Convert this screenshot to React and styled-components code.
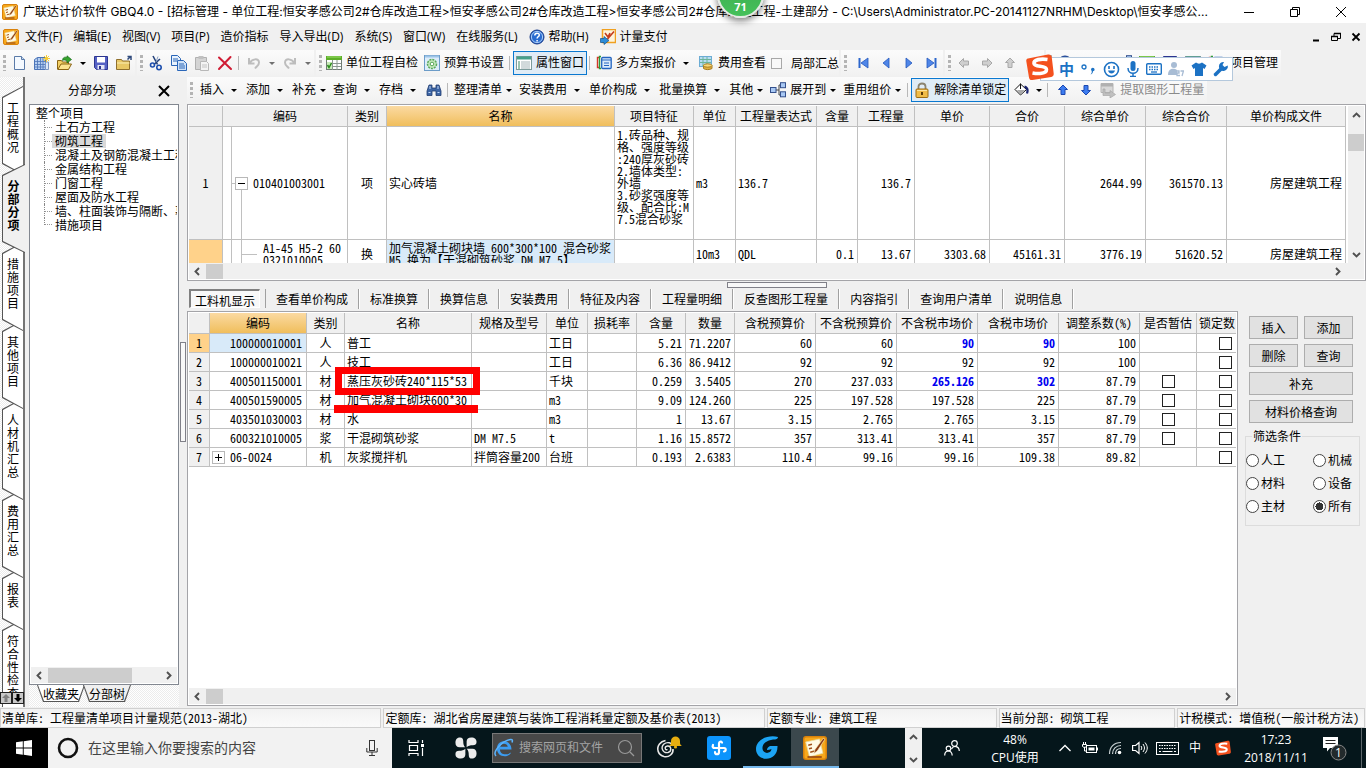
import React from 'react'
import { styled, createGlobalStyle, css } from 'styled-components'

const ui = '"Open Sans", "Noto Sans CJK SC", sans-serif'
const song = '"Noto Sans Mono CJK SC", "Noto Sans CJK SC", monospace'
const dither = 'repeating-conic-gradient(#ffffff 0 25%, #ececec 0 50%) 0 0 / 2px 2px'

const treeItems = ['土石方工程', '砌筑工程', '混凝土及钢筋混凝土工程', '金属结构工程', '门窗工程', '屋面及防水工程', '墙、柱面装饰与隔断、幕', '措施项目']
const sideTabs = ['工程概况', '分部分项', '措施项目', '其他项目', '人材机汇总', '费用汇总', '报表', '符合性检查']
const detailTabs = ['查看单价构成', '标准换算', '换算信息', '安装费用', '特征及内容', '工程量明细', '反查图形工程量', '内容指引', '查询用户清单', '说明信息']
const billCols = [['', 34], ['编码', 125], ['类别', 39], ['名称', null], ['项目特征', 79], ['单位', 42], ['工程量表达式', 81], ['含量', 41], ['工程量', 57], ['单价', 75], ['合价', 75], ['综合单价', 81], ['综合合价', 81], ['单价构成文件', 119]]
const resCols = [['', 21], ['编码', 97], ['类别', 38], ['名称', 127], ['规格及型号', 75], ['单位', 41], ['损耗率', 49], ['含量', 49], ['数量', 49], ['含税预算价', 81], ['不含税预算价', 81], ['不含税市场价', 81], ['含税市场价', 81], ['调整系数(%)', 81], ['是否暂估', 57], ['锁定数', 58]]
const resRows = [
  ['100000010001', '人', '普工', '', '工日', '5.21', '71.2207', '60', '60', '90', '90', '100'],
  ['100000010021', '人', '技工', '', '工日', '6.36', '86.9412', '92', '92', '92', '92', '100'],
  ['400501150001', '材', '蒸压灰砂砖240*115*53', '', '千块', '0.259', '3.5405', '270', '237.033', '265.126', '302', '87.79'],
  ['400501590005', '材', '加气混凝土砌块600*30', '', 'm3', '9.09', '124.260', '225', '197.528', '197.528', '225', '87.79'],
  ['403501030003', '材', '水', '', 'm3', '1', '13.67', '3.15', '2.765', '2.765', '3.15', '87.79'],
  ['600321010005', '浆', '干混砌筑砂浆', 'DM M7.5', 't', '1.16', '15.8572', '357', '313.41', '313.41', '357', '87.79'],
  ['06-0024', '机', '灰浆搅拌机', '拌筒容量200', '台班', '0.193', '2.6383', '110.4', '99.16', '99.16', '109.38', '89.82']
]

/* ---------- icons ---------- */

const Svg = ({ w = 16, h, box, children }) => (
  <svg width={w} height={h || w} viewBox={box || `0 0 ${w} ${h || w}`} fill="none" aria-hidden="true">{children}</svg>
)
const AppIcon = ({ w = 16 }) => (
  <Svg w={w} box="0 0 16 16">
    <rect x=".5" y=".5" width="15" height="15" rx="1.5" fill="#f7a81b" stroke="#d9820c" />
    <path d="M1.800 4l9.200-2 2.300 9.500-9 2.300z" fill="#fffbe6" stroke="#e8d9a0" strokeWidth=".5" />
    <path d="M3.500 6.200l2.500-.7M4 8.500l2-.5M4.800 10.800l3-.8" stroke="#a0521c" />
    <path d="M13.500 1.500L8 9l-.8 2.600L9.500 10 14.500 2.300z" fill="#8c3b12" stroke="#fff3c4" strokeWidth=".4" />
    <path d="M3 14h9.500" stroke="#8c3b12" />
  </Svg>
)
const NewDoc = () => <Svg><path d="M3.500 1.500h7l3 3v10h-10z" fill="#f4f9ff" stroke="#5a7aa8" /><path d="M10.500 1.500v3h3" stroke="#5a7aa8" fill="#c8daf0" /></Svg>
const NewGrid = () => (
  <Svg>
    <path d="M.5 4.500l3-2h8v12H.5z" fill="#b4cdf0" stroke="#4b74b8" />
    <path d="M3.500 2.500v12M6.500 2.500v12M9 2.500v12M.5 6.500h11M.5 9.500h11M.5 12h11" stroke="#4b74b8" strokeWidth=".8" />
    <path d="M11.500 7h3v7.500h-3z" fill="#dce8f8" stroke="#7a96c4" />
    <path d="M12.500 0v7M9 3.500h7M10 1l5 5M15 1l-5 5" stroke="#f4cc38" />
  </Svg>
)
const OpenFolder = () => (
  <Svg>
    <path d="M.5 14V5.500h4l1 1.500h6v7z" fill="#f3cf63" stroke="#8a6414" />
    <path d="M.8 14.500L4 9h10.500l-3 5.500z" fill="#fbe38f" stroke="#8a6414" />
    <path d="M5.500 5.500C5.500 2.500 8 1.500 10 2.500V.8l4.500 3.700L10 8V6C8.500 4.800 7 4.800 5.500 5.500z" fill="#36a52e" stroke="#17691a" strokeWidth=".7" />
  </Svg>
)
const Save = () => <Svg><path d="M1.500 1.500h13v13h-11l-2-2z" fill="#5561c4" stroke="#2c3590" /><path d="M4 2h8v5.500H4z" fill="#fff" /><path d="M4.500 10h7v4.500h-7z" fill="#e4e6f6" /><path d="M6 11h2v3H6z" fill="#2c3590" /></Svg>
const FolderUp = () => <Svg><path d="M.5 14.500v-10h5l1 1.500h7v8.500z" fill="#e9c865" stroke="#8f6f2c" /><path d="M1 8h12.500" stroke="#fbeeb4" /><path d="M11.500 4.500l3-3M11.500 1.500h3.500v3.500" stroke="#2f4a7c" strokeWidth="1.500" /></Svg>
const Cut = () => <Svg><path d="M5 1l4.500 8.500M12 4L6 9.500" stroke="#24427c" strokeWidth="1.600" /><path d="M10 1.500L8 7" stroke="#8aa0c4" /><circle cx="4.500" cy="10" r="2" stroke="#1e4fae" strokeWidth="1.600" /><circle cx="11" cy="12.500" r="2.200" stroke="#1e4fae" strokeWidth="1.600" /></Svg>
const Copy = () => <Svg><path d="M.5.5h6l3 3v7h-9z" fill="#e8f2fd" stroke="#2a66b8" /><path d="M2 4h5M2 6h4" stroke="#2a66b8" /><path d="M6.500 5.500h6l3 3v7h-9z" fill="#cfe2f8" stroke="#2a66b8" /><path d="M8 9h5M8 11h6M8 13h6" stroke="#2a66b8" /></Svg>
const Paste = () => <Svg><path d="M1.500 2.500h11v12h-11z" fill="#d4d4d4" stroke="#b0b0b0" /><path d="M4.500 1h5v3h-5z" fill="#c0c0c0" /><path d="M6.500 6.500h6l2 2v7h-8z" fill="#f4f4f4" stroke="#b8b8b8" /><path d="M8 10h5M8 12h5" stroke="#c4c4c4" /></Svg>
const RedX = () => <Svg><path d="M2 2.500l12 11.500M13.500 2L2 14" stroke="#d01c34" strokeWidth="2" strokeLinecap="round" /></Svg>
const Undo = ({ flip }) => <Svg><g transform={flip ? 'matrix(-1 0 0 1 16 0)' : undefined}><path d="M3 3v5.500h5.500" stroke="#bdbdbd" strokeWidth="2" /><path d="M4 8c1.500-4 9-5.500 9-.5 0 3-2 3.500-4 6" stroke="#bdbdbd" strokeWidth="2" /></g></Svg>
const CheckTable = () => <Svg><rect x=".5" y="1.500" width="15" height="13" fill="#fff" stroke="#707c74" /><path d="M0 1h16v4H0z" fill="#5cae28" /><path d="M1 2h14" stroke="#9be06c" /><path d="M1 8.500h14M1 11.500h14M6.500 5v10M11 5v10" stroke="#8c9890" /><path d="M1 7h5v7H1z" fill="#c8ecb8" /><path d="M1.500 10l1.500 2.500L5.500 8" stroke="#2b8a1c" strokeWidth="1.500" /></Svg>
const Gear = () => <Svg><rect x=".5" y=".5" width="15" height="15" fill="#dcecfa" stroke="#6c9cc8" /><path d="M1 1.500h14" stroke="#9cc4e8" strokeWidth="2" /><circle cx="8" cy="9" r="4.500" fill="#c4e8bc" stroke="#5aa85a" strokeDasharray="2 1" strokeWidth="1.500" /><circle cx="8" cy="9" r="1.800" fill="#fff" stroke="#5aa85a" /></Svg>
const ListWin = () => <Svg><rect x=".5" y="1.500" width="15" height="13" fill="#fff" stroke="#7c9c9c" /><path d="M1 3h14" stroke="#46a08c" strokeWidth="3" /><path d="M2 7h2M2 9h2M2 11h2M2 13h2" stroke="#3c8c64" /><path d="M5 7h9M5 9h9M5 11h9M5 13h9" stroke="#a4b4b8" /></Svg>
const Multi = () => <Svg><path d="M3 2.500H1.500v10H3" stroke="#d43828" strokeWidth="1.400" /><path d="M5 1.500H3.500v12H5" stroke="#2c9c38" strokeWidth="1.400" /><rect x="5.700" y="2.500" width="9.500" height="11" rx="1" fill="#dcebfc" stroke="#2464c0" strokeWidth="1.300" /><path d="M6 5h9M8 8h5M8 10.500h5" stroke="#2464c0" /></Svg>
const Fee = () => <Svg><rect x="1.500" y="1.500" width="12" height="10" fill="#b8dcf4" stroke="#6cacd4" /><path d="M2 4.500h11M2 7.500h11M5 2v9M9 2v9" stroke="#6cb49c" /><path d="M5.500 10.500v3c2 1.500 6 1.500 8.500 0v-3" fill="#e0b040" stroke="#a87c20" /><ellipse cx="9.700" cy="10.500" rx="4.300" ry="1.700" fill="#f8d878" stroke="#a87c20" /></Svg>
const Nav = ({ d, bar }) => <Svg><path d={d} fill="#4f86e8" stroke="#2458bc" strokeWidth=".8" />{bar && <path d={bar} stroke="#2c66cc" strokeWidth="2" />}</Svg>
const Arrow = ({ r = 0, c = '#cfcfcf', s = '#a8a8a8' }) => <Svg><path d="M3 8l4.500-4.500V6h5v4h-5v2.500z" fill={c} stroke={s} transform={`rotate(${r} 8 8)`} /></Svg>
const Binoc = () => <Svg><path d="M3 3h3v3h4V3h3l2 6v4.500h-5V9H6v4.500H1V9z" fill="#3c64a4" stroke="#223c70" strokeWidth=".8" /><path d="M2.500 10.500h2M11.500 10.500h2M4 4v3M12 4v3" stroke="#c0d8f8" /></Svg>
const Expand = () => <Svg><path d="M6 8h3M9 3v10M9 3h2M9 13h2" stroke="#444" /><rect x=".5" y="5.500" width="5.500" height="5" fill="#a8c8f4" stroke="#34508c" /><rect x="10.500" y=".7" width="5" height="5" fill="#a8c8f4" stroke="#34508c" /><rect x="10.500" y="9.800" width="5" height="5" fill="#a8c8f4" stroke="#34508c" /></Svg>
const Lock = () => <Svg><path d="M4.500 8V4.500c0-4 7-4 7 0V8" stroke="#8c8470" strokeWidth="1.800" /><rect x="2" y="7" width="12" height="8.500" rx="1" fill="#f0bc48" stroke="#9c6c14" /><path d="M3 8.500h10" stroke="#fbe4a0" /><path d="M8 10v3" stroke="#5c3c08" strokeWidth="2" /></Svg>
const Paint = () => <Svg><path d="M2 7.500L7.500 2l6 5.500L7.500 13z" fill="#fff" stroke="#111" /><path d="M4 8h8l-4.500 4.500z" fill="#aaa" /><path d="M7.500 7V1.500" stroke="#111" /><path d="M11.500 4.500c3 1 3.500 4 2.500 7" stroke="#1a2470" strokeWidth="2.200" /></Svg>
const Extract = () => <Svg><path d="M1 1.500h12v9H1z" fill="#d8d8d8" stroke="#b4b4b4" /><path d="M1 3h12" stroke="#b0b0b0" strokeWidth="3" /><path d="M5 7v4h5V8.500l5.500 4L10 16v-2.500H3V7z" fill="#c0c0c0" stroke="#a8a8a8" strokeWidth=".7" /></Svg>
const Help = () => <Svg><circle cx="8" cy="8" r="7" fill="#2a6cd0" stroke="#1c3c88" /><circle cx="8" cy="8" r="5.600" stroke="#a8ccf8" /><path d="M5.800 6.500c0-3 4.500-3 4.500-.4 0 1.700-2.200 1.500-2.200 3.400M8.100 11v1.500" stroke="#fff" strokeWidth="1.500" /></Svg>
const PayIcon = () => <Svg><rect x="2.500" y=".5" width="13" height="13" fill="#fdf4dc" stroke="#f0a020" strokeWidth="1.500" /><path d="M14 2.500L7.500 10M5 4l3 4 2-4" stroke="#c43c1c" strokeWidth="1.600" /><path d="M.5 9.500H4V7.500l5 4L4 15.500v-2H.5z" fill="#2c8cd8" stroke="#10508c" strokeWidth=".7" /></Svg>
const Chev = ({ r = 0, c = '#505050', w = 9 }) => <Svg w={w} box="0 0 9 9"><path d="M6 1L2.500 4.500 6 8" stroke={c} strokeWidth="1.900" transform={`rotate(${r} 4.500 4.500)`} /></Svg>
const SogouS = ({ w }) => (
  <Svg w={w} box="0 0 28 28">
    <path d="M2 5.500L22 1.500c2-.4 3.300.5 3.700 2.300l2 16.700c.2 2-.6 3-2.500 3.400L6.500 27c-2 .3-3.200-.6-3.500-2.500L.3 8.200C.1 6.700.6 5.800 2 5.500z" fill="#f4511e" />
    <path d="M21.500 6.500C15 5.500 7.500 6.500 8 10.500c.5 4 12.500 1.500 12.500 6 0 4.500-8.500 4.500-14 3.500" stroke="#fff" strokeWidth="3.600" />
  </Svg>
)

/* ---------- base ---------- */

const Global = createGlobalStyle`
  *, *::before, *::after { box-sizing: border-box; }
  body { margin: 0; background: #f0f0f0; overflow: hidden; }
  button, input { font: inherit; color: inherit; margin: 0; }
  button { padding: 0; border: 0; background: none; white-space: nowrap; }
  svg { display: block; flex: none; }
`
const Window = styled.div`
  position: relative;
  display: flex;
  flex-direction: column;
  height: 100vh;
  font: 12px/16px ${ui};
  color: #000;
  background: #f0f0f0;
`
const TitleBar = styled.header`
  display: flex;
  align-items: center;
  height: 23px;
  flex: none;
  background: #fff;
  padding: 0 2px;
`
const Title = styled.h1`
  flex: 1;
  min-width: 0;
  margin: 0 0 0 5px;
  font: 400 12px/16px Inter, "Noto Sans CJK SC", sans-serif;
  white-space: nowrap;
  overflow: hidden;
`
const WinButton = styled.button`
  width: ${p => (p.$small ? 20 : 46)}px;
  height: 22px;
  display: grid;
  place-items: center;
`
const Bubble = styled.div`
  position: absolute;
  left: 717px;
  top: -29px;
  width: 47px;
  height: 47px;
  border-radius: 50%;
  border: 2px solid #e4e9e4;
  background: linear-gradient(#3aa64c, #45c15a);
  box-shadow: 0 3px 7px rgba(0, 0, 0, 0.5);
  color: #fff;
  font: bold 11px/14px ${ui};
  text-align: center;
  padding-top: 27px;
  z-index: 5;
`
const MenuBar = styled.nav`
  display: flex;
  align-items: center;
  height: 27px;
  flex: none;
  padding-left: 3px;
`
const MenuItem = styled.button`
  display: flex;
  align-items: center;
  gap: 4px;
  height: 22px;
  padding: 0 5px 0 6px;
`
const Spacer = styled.div`
  flex: 1;
`
const ToolRow = styled.div`
  display: flex;
  gap: 2px;
  height: 27px;
  flex: none;
`
const ToolGroup = styled.div`
  display: flex;
  align-items: center;
  height: 26px;
  background: linear-gradient(#fbfbfb, #f1f1f1);
`
const Grip = styled.i`
  width: 3px;
  height: 16px;
  margin: 0 ${p => (p.$wide ? 4 : 1)}px 0 3px;
  background: repeating-linear-gradient(#b4b4b4 0 3px, transparent 3px 5px);
`
const Tool = styled.button`
  display: flex;
  align-items: center;
  gap: 4px;
  height: 24px;
  padding: 0 3px;
  color: ${p => (p.disabled ? '#8a8a8a' : '#000')};
  ${p => p.$on && css`
    padding: 0 2px;
    border: 1px solid #0a78d0;
    background: #e0ecf6;
  `}
`
const IconTool = styled.button`
  width: 23px;
  height: 24px;
  display: grid;
  place-items: center;
`
const Sep = styled.i`
  width: 1px;
  height: 14px;
  margin: 0 3px 0 2px;
  background: #b8b8b8;
`
const Caret = styled.i`
  width: ${p => (p.$tight ? 14 : 19)}px;
  margin-right: -3px;
  margin-left: -4px;
  display: grid;
  place-items: center;
  &::after {
    content: '';
    border: 3px solid transparent;
    border-top-color: #000;
    border-bottom: 0;
  }
`
const CaretTool = styled.button`
  width: 13px;
  height: 24px;
  display: grid;
  place-items: center;
  &::after {
    content: '';
    border: 3px solid transparent;
    border-top-color: ${p => (p.disabled ? '#707070' : '#000')};
    border-bottom: 0;
  }
`
const CheckLabel = styled.label`
  display: flex;
  align-items: center;
  gap: 9px;
  padding: 0 0 0 2px;
  font-family: ${song};
`
const ToolCheck = styled.input`
  appearance: none;
  width: 11px;
  height: 11px;
  border: 1px solid #a8a8a8;
  background: #f8f8f8;
`
const ImeBar = styled.div`
  position: absolute;
  left: 1026px;
  top: 52px;
  width: 207px;
  height: 29px;
  display: flex;
  align-items: center;
  z-index: 4;
  &::before {
    content: '';
    position: absolute;
    inset: 5px 0 0 14px;
    background: #fff;
    border: 1px solid #b4c8dc;
  }
  > * { position: relative; }
`
const ImeItems = styled.div`
  flex: 1;
  display: flex;
  align-items: center;
  justify-content: space-between;
  padding: 5px 4px 0 5px;
  color: #1c72c4;
  font: bold 15px/20px ${ui};
`

/* ---------- work area ---------- */

const Work = styled.div`
  display: flex;
  flex: 1;
  min-height: 0;
`
const SideTabs = styled.nav`
  position: relative;
  width: 25px;
  flex: none;
  display: flex;
  flex-direction: column;
  padding: 9px 0 0 2px;
  overflow: hidden;
  font-family: ${song};
  background: linear-gradient(#747474, #747474) 100% 0 / 2px 100% no-repeat, ${dither};
`
const SideTab = styled.button`
  position: relative;
  flex: none;
  width: ${p => (p.$on ? 23 : 21)}px;
  margin-bottom: -11px;
  padding: 15px 0 22px ${p => (p.$on ? 0 : 1)}px;
  line-height: 13px;
  white-space: pre;
  z-index: ${p => p.$z};
  font-weight: ${p => (p.$on ? 'bold' : 'normal')};
  background: #555;
  clip-path: polygon(0 11px, 100% 0, 100% 100%, 0 calc(100% - 11px));
  &::before {
    content: '';
    position: absolute;
    inset: 1px 0 1px 1px;
    z-index: -1;
    background: ${p => (p.$on ? '#f0f0f0' : '#fff')};
    clip-path: polygon(0 11px, 100% 0, 100% 100%, 0 calc(100% - 11px));
  }
`
const SideScroll = styled.div`
  position: absolute;
  left: 0;
  bottom: 3px;
  z-index: 20;
  display: flex;
  button {
    width: 12px;
    height: 12px;
    display: grid;
    place-items: center;
    border: 1px solid #222;
    background: #c8c8c8;
  }
`
const TreePane = styled.aside`
  width: 154px;
  flex: none;
  display: flex;
  flex-direction: column;
  padding-left: 4px;
`
const PaneTitle = styled.div`
  height: 27px;
  flex: none;
  display: flex;
  align-items: center;
  justify-content: space-between;
  padding: 0 8px 0 39px;
`
const Tree = styled.div`
  flex: 1;
  min-height: 0;
  display: flex;
  flex-direction: column;
  border: 1px solid #828790;
  background: #fff;
  padding: 1px;
  font-family: ${song};
`
const TreeList = styled.ul`
  flex: 1;
  margin: 0;
  padding: 0 0 0 5px;
  list-style: none;
  line-height: 14px;
  white-space: nowrap;
  overflow: hidden;
  ul {
    margin: 0;
    padding: 0 0 0 8px;
    list-style: none;
  }
`
const TreeNode = styled.li`
  display: flex;
  align-items: center;
  height: 14px;
  &::before {
    content: '';
    flex: none;
    width: 8px;
    height: ${p => (p.$last ? 7 : 14)}px;
    align-self: flex-start;
    border-left: 1px dotted #888;
    background: repeating-linear-gradient(90deg, #999 0 1px, transparent 1px 2px) 0 ${p => (p.$last ? 6 : 7)}px / 8px 1px no-repeat;
  }
  span {
    padding: 0 3px;
    background: ${p => (p.$on ? '#d9d9d9' : 'none')};
  }
`
const BottomTabs = styled.div`
  height: 22px;
  flex: none;
  display: flex;
  padding-left: 8px;
  background: ${dither};
  font-family: ${song};
`
const BottomTab = styled.button`
  position: relative;
  width: 48px;
  height: 17px;
  margin-right: -2px;
  line-height: 17px;
  background: #555;
  clip-path: polygon(0 0, 100% 0, calc(100% - 6px) 100%, 6px 100%);
  z-index: 1;
  &::before {
    content: '';
    position: absolute;
    inset: 0 1px 1px 1px;
    z-index: -1;
    background: ${p => (p.$on ? '#f0f0f0' : '#fff')};
    clip-path: polygon(0 0, 100% 0, calc(100% - 6px) 100%, 6px 100%);
  }
`
const VSplit = styled.div`
  width: 8px;
  flex: none;
  display: grid;
  align-items: center;
  i {
    width: 6px;
    height: 100px;
    margin-left: 1px;
    border: 1px solid #808088;
    background: #f8f8f8;
  }
`
const Right = styled.main`
  flex: 1;
  min-width: 0;
  display: flex;
  flex-direction: column;
`
const GridBox = styled.section`
  position: relative;
  display: flex;
  flex-direction: column;
  min-width: 0;
  min-height: 0;
  border: 1px solid #a4a4a8;
  background: #fff;
  padding: 1px;
  font-family: ${song};
  flex: ${p => (p.$h ? `0 0 ${p.$h}px` : '1')};
`
const GridView = styled.div`
  flex: 1;
  min-width: 0;
  min-height: 0;
  overflow: hidden;
`
const GridRow = styled.div`
  display: flex;
  flex: 1;
  min-height: 0;
  gap: 2px;
`
const Table = styled.table`
  width: ${p => (p.$fill ? '100%' : 'max-content')};
  table-layout: fixed;
  border-collapse: separate;
  border-spacing: 0;
  line-height: 12px;
  th, td {
    border-right: 1px solid #c0c0c0;
    border-bottom: 1px solid #c0c0c0;
    padding: 0 2px;
    font-weight: 400;
    white-space: nowrap;
    overflow: hidden;
  }
`
const HeadCell = styled.th`
  height: 21px;
  text-align: ${p => (p.$left ? 'left' : 'center')};
  background: ${p => (p.$on ? 'linear-gradient(#fbdaa2, #f0be5c)' : '#f0f0f0')};
`
const RowHead = styled.th`
  height: 19px;
  text-align: center;
  background: ${p => (p.$on ? '#ffd28a' : '#f0f0f0')};
`
const Cell = styled.td`
  text-align: ${p => p.$a || 'left'};
  background: ${p => (p.$on ? '#d8eaf9' : '#fff')};
  && { padding-right: ${p => (p.$a === 'right' ? 3 : 2)}px; }
  ${p => p.$price && css`
    && { color: #0000f0; font-weight: bold; }
  `}
  ${p => p.$wrap && css`
    && { white-space: pre; vertical-align: top; padding-top: 2px; }
  `}
`
const CodeCell = styled.td`
  && { padding: 0; }
  > div {
    position: relative;
    display: flex;
    align-items: center;
    height: ${p => p.$h}px;
    padding-left: ${p => p.$pad}px;
    white-space: pre;
    background: ${p => p.$lines};
  }
`
const ToggleBox = styled.button`
  width: 13px;
  height: 13px;
  border: 1px solid #b8b8b8;
  background: #fff;
  display: inline-grid;
  place-items: center;
  margin-right: 5px;
  vertical-align: middle;
`
const GridCheck = styled.input`
  appearance: none;
  display: block;
  width: 13px;
  height: 13px;
  border: 1px solid #222;
  background: #fff;
  && { margin: 0 auto; }
`
const HScroll = styled.div`
  display: flex;
  align-items: center;
  height: 16px;
  flex: none;
  background: #f0f0f0;
  padding: 0 ${p => (p.$corner ? 22 : 4)}px 0 4px;
  i {
    height: 15px;
    width: ${p => p.$thumb}px;
    margin-left: 4px;
    background: #cdcdcd;
  }
`
const VScroll = styled.div`
  width: 16px;
  flex: none;
  display: flex;
  flex-direction: column;
  align-items: center;
  background: #f0f0f0;
  padding: 5px 0 4px;
  i {
    width: 16px;
    height: 17px;
    margin-top: 14px;
    background: #cdcdcd;
  }
`
const HSplit = styled.div`
  height: 8px;
  flex: none;
  display: flex;
  justify-content: center;
  i {
    width: 100px;
    height: 6px;
    margin-top: 1px;
    border: 1px solid #808088;
    background: #f8f8f8;
  }
`
const DetailTabs = styled.nav`
  display: flex;
  height: 22px;
  flex: none;
  padding-left: 2px;
  font-family: ${song};
`
const DetailTab = styled.button`
  height: 20px;
  padding: 0 10px;
  line-height: 20px;
  border-right: 1px solid #a0a0a0;
  box-shadow: 1px 0 #fff;
  margin-right: 1px;
  ${p => p.$on && css`
    height: 19px;
    padding: 0 4px;
    margin-right: 6px;
    border: 1px solid #fff;
    border-top: 2px solid #808080;
    border-left: 2px solid #808080;
    background: #f8f8f8;
    box-shadow: 5px 0 #f0f0f0, 6px 0 #a0a0a0;
  `}
`
const Detail = styled.div`
  flex: 1;
  min-height: 0;
  display: flex;
  padding-bottom: 1px;
`
const RedBox = styled.div`
  position: absolute;
  left: 147px;
  top: 55px;
  width: 145px;
  height: 28px;
  border: 7px solid #f00;
`
const RedLine = styled.div`
  position: absolute;
  left: 146px;
  top: 93px;
  width: 144px;
  height: 8px;
  background: #f00;
`
const Actions = styled.aside`
  width: 128px;
  flex: none;
  padding: 5px 6px 0 7px;
  font-family: ${song};
`
const ActionGrid = styled.div`
  display: grid;
  grid-template-columns: 1fr 1fr;
  gap: 5px 6px;
  padding: 0 7px 0 4px;
`
const ActionButton = styled.button`
  height: 23px;
  border: 1px solid #adadad;
  background: #e1e1e1;
  grid-column: span ${p => p.$span || 1};
`
const Filter = styled.fieldset`
  display: grid;
  grid-template-columns: 67px 1fr;
  row-gap: 7px;
  margin: 6px 0 0;
  padding: 9px 0 11px;
  border: 1px solid #dcdcdc;
  legend {
    margin-left: 6px;
    padding: 0 1px;
    line-height: 14px;
  }
  label {
    display: flex;
    align-items: center;
    gap: 2px;
    white-space: nowrap;
  }
`
const Radio = styled.input`
  appearance: none;
  width: 13px;
  height: 13px;
  flex: none;
  border: 1px solid #444;
  border-radius: 50%;
  background: #fff;
  &:checked { background: radial-gradient(#333 0 4px, #fff 4px); }
`
const StatusBar = styled.footer`
  display: grid;
  grid-template-columns: 382fr 382fr 230fr 177fr 188fr;
  gap: 2px;
  height: 21px;
  flex: none;
  padding: 1px 1px 0 0;
  font-family: ${song};
`
const StatusCell = styled.div`
  border: 1px solid #d0d0d0;
  background: linear-gradient(#f2f2f2, #fafafa);
  padding-left: 1px;
  line-height: 18px;
  white-space: pre;
  overflow: hidden;
`

/* ---------- task bar ---------- */

const TaskBar = styled.footer`
  display: flex;
  height: 40px;
  flex: none;
  background: #05161b;
  color: #fff;
`
const TaskButton = styled.button`
  width: ${p => p.$w || 48}px;
  height: 40px;
  flex: none;
  display: grid;
  place-items: center;
  background: ${p => (p.$active ? '#3b484d' : 'none')};
  box-shadow: ${p => (p.$line ? 'inset 0 -2px #76b9ed' : 'none')};
`
const StartButton = styled(TaskButton)`
  background: #000;
`
const Search = styled.label`
  display: flex;
  align-items: center;
  gap: 9px;
  width: 344px;
  min-width: 0;
  padding: 0 14px 0 9px;
  background: #f2f2f2;
  input {
    flex: 1;
    min-width: 0;
    border: 0;
    padding: 0;
    outline: 0;
    background: none;
    font: 14px/20px ${ui};
  }
  input::placeholder { color: #444; opacity: 1; }
`
const WebSearch = styled.label`
  display: flex;
  align-items: center;
  width: 150px;
  min-width: 0;
  gap: 5px;
  height: 30px;
  margin: 5px 0 0;
  padding: 0 6px 0 1px;
  border: 1px solid #777;
  background: #484848;
  input {
    flex: 1;
    width: 0;
    min-width: 0;
    border: 0;
    padding: 0;
    outline: 0;
    background: none;
    font: 12px/20px ${ui};
  }
  input::placeholder { color: #a4a4a4; opacity: 1; }
`
const TaskScroll = styled.div`
  width: 17px;
  display: flex;
  flex-direction: column;
  justify-content: space-between;
  align-items: center;
  padding: 5px 0 4px;
  background: #f0f0f0;
`
const TaskText = styled.div`
  width: ${p => p.$w}px;
  text-align: center;
  font: 12px/18px ${ui};
  padding-top: 3px;
`
const Edge = styled.i`
  width: 5px;
  border-left: 1px solid #5c666a;
`

const Minus = () => <Svg w={11}><path d="M2 5.500h7" stroke="#000" /></Svg>
const Plus = () => <Svg w={11}><path d="M2 5.500h7M5.500 2v7" stroke="#000" /></Svg>

const Drop = ({ children, icon, tight }) => <Tool>{icon}{children}<Caret $tight={tight} /></Tool>

function TopBars() {
  return (
    <>
      <TitleBar>
        <AppIcon />
        <Title>{'广联达计价软件 GBQ4.0 - [招标管理 - 单位工程:恒安孝感公司2#仓库改造工程>恒安孝感公司2#仓库改造工程>恒安孝感公司2#仓库改造工程-土建部分 - C:\\Users\\Administrator.PC-20141127NRHM\\Desktop\\恒安孝感公...'}</Title>
        <WinButton aria-label="最小化"><Svg w={10}><path d="M0 5.500h10" stroke="#000" /></Svg></WinButton>
        <WinButton aria-label="还原"><Svg w={10}><path d="M.5 2.500h7v7h-7zM2.500 2.500v-2h7v7h-2" stroke="#000" /></Svg></WinButton>
        <WinButton aria-label="关闭"><Svg w={10}><path d="M0 0l10 10M10 0L0 10" stroke="#000" /></Svg></WinButton>
      </TitleBar>
      <Bubble>71</Bubble>
      <MenuBar>
        <AppIcon />
        {['文件(F)', '编辑(E)', '视图(V)', '项目(P)', '造价指标', '导入导出(D)', '系统(S)', '窗口(W)', '在线服务(L)'].map(t => <MenuItem key={t}>{t}</MenuItem>)}
        <MenuItem><Help />帮助(H)</MenuItem>
        <MenuItem><PayIcon />计量支付</MenuItem>
        <Spacer />
        <WinButton $small aria-label="最小化文档"><Svg w={10}><path d="M2 8.500h6" stroke="#000" strokeWidth="2" /></Svg></WinButton>
        <WinButton $small aria-label="还原文档"><Svg w={10}><path d="M.5 4.500h6v4h-6zM3 4V1.500h6.500v5H7" stroke="#000" /><path d="M0 4.500h7M3 1.500h7" stroke="#000" strokeWidth="1.500" /></Svg></WinButton>
        <WinButton $small aria-label="关闭文档"><Svg w={10}><path d="M1.500 1.500l7 7M8.500 1.500l-7 7" stroke="#000" strokeWidth="1.800" /></Svg></WinButton>
      </MenuBar>
      <ToolRow>
        <ToolGroup>
          <Grip />
          <IconTool aria-label="新建"><NewDoc /></IconTool>
          <IconTool aria-label="新建表"><NewGrid /></IconTool>
          <IconTool aria-label="打开"><OpenFolder /></IconTool>
          <CaretTool aria-label="打开选项" />
          <IconTool aria-label="保存"><Save /></IconTool>
          <IconTool aria-label="目录"><FolderUp /></IconTool>
        </ToolGroup>
        <ToolGroup>
          <Grip />
          <IconTool aria-label="剪切"><Cut /></IconTool>
          <IconTool aria-label="复制"><Copy /></IconTool>
          <IconTool aria-label="粘贴"><Paste /></IconTool>
          <IconTool aria-label="删除"><RedX /></IconTool>
          <Sep />
          <IconTool aria-label="撤销"><Undo /></IconTool>
          <CaretTool disabled aria-label="撤销列表" />
          <IconTool aria-label="重做"><Undo flip /></IconTool>
          <CaretTool disabled aria-label="重做列表" />
        </ToolGroup>
        <ToolGroup>
          <Grip />
          <Tool><CheckTable />单位工程自检</Tool>
          <Tool><Gear />预算书设置</Tool>
          <Sep />
          <Tool $on><ListWin />属性窗口</Tool>
          <Sep />
          <Drop icon={<Multi />}>多方案报价</Drop>
          <Tool><Fee />费用查看</Tool>
          <CheckLabel><ToolCheck type="checkbox" />局部汇总</CheckLabel>
        </ToolGroup>
        <ToolGroup>
          <Grip $wide />
          <IconTool aria-label="第一个"><Nav d="M13 3v10L6 8z" bar="M4.500 3v10" /></IconTool>
          <IconTool aria-label="上一个"><Nav d="M11 3v10L5 8z" /></IconTool>
          <IconTool aria-label="下一个"><Nav d="M5 3v10l6-5z" /></IconTool>
          <IconTool aria-label="最后一个"><Nav d="M3 3v10l7-5z" bar="M11.500 3v10" /></IconTool>
        </ToolGroup>
        <ToolGroup>
          <Grip />
          <IconTool aria-label="左移"><Arrow /></IconTool>
          <IconTool aria-label="右移"><Arrow r={180} /></IconTool>
          <IconTool aria-label="上移"><Arrow r={90} /></IconTool>
          <IconTool aria-label="下移"><Arrow r={270} /></IconTool>
        </ToolGroup>
        <ToolGroup>
          <Grip />
          <IconTool aria-label="查找"><Help /></IconTool>
          <CaretTool aria-label="查找选项" />
          <IconTool aria-label="刷新"><Binoc /></IconTool>
          <IconTool aria-label="排序"><Expand /></IconTool>
          <IconTool aria-label="检查"><CheckTable /></IconTool>
          <IconTool aria-label="存储"><Save /></IconTool>
          <IconTool aria-label="列表"><ListWin /></IconTool>
          <IconTool aria-label="方案"><Multi /></IconTool>
          <Tool>项目管理</Tool>
        </ToolGroup>
      </ToolRow>
      <ImeBar>
        <SogouS w={28} />
        <ImeItems>
          <span>中</span>
          <Svg w={16}><circle cx="4" cy="6" r="2" stroke="#1c72c4" strokeWidth="1.300" /><path d="M11 8.500a1.800 1.800 0 1 1 2 1.800c0 1.500-.8 2.700-2.500 3.200 1-.9 1.400-1.900 1.300-3z" fill="#1c72c4" /></Svg>
          <Svg w={17}><circle cx="8.500" cy="8.500" r="7" stroke="#1c72c4" strokeWidth="1.600" /><path d="M5 9.500c1 4 6 4 7 0z" fill="#1c72c4" /><path d="M6 5v3M11 5v3" stroke="#1c72c4" strokeWidth="1.600" /></Svg>
          <Svg w={14} h={16}><rect x="4.500" y="0" width="5" height="10" rx="2.500" fill="#1c72c4" /><path d="M2 7c0 7 10 7 10 0M7 12v4M4 15.500h6" stroke="#1c72c4" strokeWidth="1.500" /></Svg>
          <Svg w={16} h={12}><rect x=".7" y=".7" width="14.600" height="10.600" rx="1" stroke="#1c72c4" strokeWidth="1.400" /><path d="M3 4h10M3 6.500h10" stroke="#1c72c4" strokeWidth="1.300" strokeDasharray="1.500 1" /><path d="M5 9h6" stroke="#1c72c4" strokeWidth="1.300" /></Svg>
          <Svg w={16}><circle cx="6" cy="4" r="3" fill="#a8bcd4" /><path d="M0 14c0-7 6-7 9-5v5z" fill="#a8bcd4" /><path d="M8 10h3v2H9v2.500h3M12.500 10h3l-1.500 5" stroke="#a8bcd4" strokeWidth="1.300" /></Svg>
          <Svg w={16} h={14}><path d="M5 .5c1.500 1.500 4.500 1.500 6 0l4.500 3L13.500 7 12 6v8H4V6L2.500 7 .5 3.500z" fill="#1c72c4" /></Svg>
          <Svg w={16}><path d="M2.500 13.500L9 7" stroke="#1c72c4" strokeWidth="3.500" strokeLinecap="round" /><path d="M14.800 4.500A4.500 4.500 0 1 1 11 1l-1.500 3 2 2z" fill="#1c72c4" /></Svg>
        </ImeItems>
      </ImeBar>
    </>
  )
}

function TreeArea() {
  return (
    <>
      <SideTabs>
        {sideTabs.map((t, i) => <SideTab key={t} $on={i === 1} $z={i === 1 ? 10 : 8 - i}>{t.split('').join('\n')}</SideTab>)}
        <SideScroll>
          <button disabled aria-label="上翻"><Svg w={8}><path d="M4 0l4 4H5.500v4h-3V4H0z" fill="#808080" /></Svg></button>
          <button aria-label="下翻"><Svg w={8}><path d="M4 8L0 4h2.500V0h3v4H8z" fill="#000" /></Svg></button>
        </SideScroll>
      </SideTabs>
      <TreePane>
        <PaneTitle>
          分部分项
          <button aria-label="关闭面板"><Svg w={14}><path d="M2 2l10 10M12 2L2 12" stroke="#000" strokeWidth="2" /></Svg></button>
        </PaneTitle>
        <Tree>
          <TreeList>
            <li>
              整个项目
              <ul>{treeItems.map((t, i) => <TreeNode key={t} $on={i === 1} $last={i === 7}><span>{t}</span></TreeNode>)}</ul>
            </li>
          </TreeList>
          <HScroll $thumb={84}><Chev /><i /><Spacer /><Chev r={180} /></HScroll>
        </Tree>
        <BottomTabs>
          <BottomTab>收藏夹</BottomTab>
          <BottomTab $on>分部树</BottomTab>
        </BottomTabs>
      </TreePane>
      <VSplit><i /></VSplit>
    </>
  )
}

const Cols = ({ cols }) => <colgroup>{cols.map(([n, w], i) => <col key={i} width={w || undefined} />)}</colgroup>

function BillGrid() {
  const line = 'linear-gradient(#c0c0c0, #c0c0c0)'
  return (
    <GridBox $h={177}>
      <GridRow>
        <GridView>
          <Table $fill>
            <Cols cols={billCols} />
            <thead><tr>{billCols.map(([n], i) => <HeadCell key={i} $on={i === 3}>{n}</HeadCell>)}</tr></thead>
            <tbody>
              <tr>
                <RowHead>1</RowHead>
                <CodeCell $h={112} $pad={12} $lines={`${line} 8px 0 / 1px 100% no-repeat, ${line} 18px 56px / 1px 60px no-repeat, ${line} 9px 56px / 4px 1px no-repeat`}>
                  <div><ToggleBox aria-label="折叠"><Minus /></ToggleBox>010401003001</div>
                </CodeCell>
                <Cell $a="center">项</Cell>
                <Cell>实心砖墙</Cell>
                <Cell $wrap>{'1.砖品种、规\n格、强度等级\n:240厚灰砂砖\n2.墙体类型:\n外墙\n3.砂浆强度等\n级、配合比:M\n7.5混合砂浆'}</Cell>
                <Cell>m3</Cell>
                <Cell>136.7</Cell>
                <Cell />
                <Cell $a="right">136.7</Cell>
                <Cell />
                <Cell />
                <Cell $a="right">2644.99</Cell>
                <Cell $a="right">361570.13</Cell>
                <Cell $a="right">房屋建筑工程</Cell>
              </tr>
              <tr>
                <RowHead $on />
                <CodeCell $h={28} $pad={40} $lines={`${line} 8px 0 / 1px 100% no-repeat, ${line} 18px 0 / 1px 100% no-repeat, ${line} 18px 14px / 16px 1px no-repeat`}>
                  <div>{'A1-45 H5-2 60\n0321010005'}</div>
                </CodeCell>
                <Cell $a="center">换</Cell>
                <Cell $on $wrap>{'加气混凝土砌块墙 600*300*100 混合砂浆\nM5 换为【干混砌筑砂浆 DM M7.5】'}</Cell>
                <Cell />
                <Cell>10m3</Cell>
                <Cell>QDL</Cell>
                <Cell $a="right">0.1</Cell>
                <Cell $a="right">13.67</Cell>
                <Cell $a="right">3303.68</Cell>
                <Cell $a="right">45161.31</Cell>
                <Cell $a="right">3776.19</Cell>
                <Cell $a="right">51620.52</Cell>
                <Cell $a="right">房屋建筑工程</Cell>
              </tr>
            </tbody>
          </Table>
        </GridView>
        <VScroll><Chev r={90} /><i /><Spacer /><Chev r={270} /></VScroll>
      </GridRow>
      <HScroll $thumb={17} $corner><Chev /><i /><Spacer /><Chev r={180} /></HScroll>
    </GridBox>
  )
}

function ResourceGrid() {
  return (
    <GridBox>
      <GridView>
        <Table style={{ width: resCols.reduce((s, c) => s + c[1], 0) }}>
          <Cols cols={resCols} />
          <thead><tr>{resCols.map(([n], i) => <HeadCell key={i} $on={i === 1} $left={i === 15}>{n}</HeadCell>)}</tr></thead>
          <tbody>
            {resRows.map((r, i) => (
              <tr key={r[0]}>
                <RowHead $on={i === 0}>{i + 1}</RowHead>
                <CodeCell $h={18} $pad={i === 6 ? 2 : 20} $lines={i === 0 ? '#d8eaf9' : '#fff'}>
                  <div>{i === 6 && <ToggleBox aria-label="展开"><Plus /></ToggleBox>}{r[0]}</div>
                </CodeCell>
                <Cell $a="center">{r[1]}</Cell>
                {r.slice(2).map((v, k) => (
                  <Cell key={k} $a={k > 2 ? 'right' : 'left'} $price={(i === 0 || i === 2) && (k === 7 || k === 8)}>{v}</Cell>
                )).toSpliced(3, 0, <Cell key="loss" />)}
                <Cell>{i > 1 && i < 6 && <GridCheck type="checkbox" aria-label={`暂估 ${r[2]}`} />}</Cell>
                <Cell><GridCheck type="checkbox" aria-label={`锁定 ${r[2]}`} /></Cell>
              </tr>
            ))}
          </tbody>
        </Table>
      </GridView>
      <HScroll $thumb={17}><Chev /><i /><Spacer /><Chev r={180} /></HScroll>
      <RedBox />
      <RedLine />
    </GridBox>
  )
}

function Taskbar() {
  return (
    <TaskBar>
      <StartButton aria-label="开始"><Svg w={16}><path d="M0 2.300l6.800-1V7.600H0zM7.700 1.200L16 0v7.600H7.700zM0 8.400h6.800v6.300l-6.800-1zM7.700 8.400H16V16l-8.300-1.200z" fill="#fff" /></Svg></StartButton>
      <Search>
        <Svg w={22}><circle cx="11" cy="11" r="9" stroke="#111" strokeWidth="2.600" /></Svg>
        <input placeholder="在这里输入你要搜索的内容" aria-label="搜索" />
        <Svg w={12} h={16}><rect x="3.500" y=".5" width="5" height="10" stroke="#333" /><path d="M.8 8v4h10.400V8M6 12v3.500M3 15.500h6" stroke="#333" /></Svg>
      </Search>
      <TaskButton aria-label="任务视图"><Svg w={16}><path d="M1 0v2.500h9V0M1.500 5.500h8v5h-8zM1 16v-2.500h9V16M14.500 0v3M14.500 8v8" stroke="#fff" strokeWidth="1.200" /><path d="M13 4h3v3h-3z" fill="#fff" /></Svg></TaskButton>
      <TaskButton $w={52} aria-label="风车">
        <Svg w={22} box="0 0 24 24">
          {[0, 90, 180, 270].map(a => <path key={a} d="M12.700 11.200V5c0-3 2-4.500 5-4.500 4 0 5.800 2 5.800 5 0 2.500-1.500 3.500-4 3.500-3 0-5 .5-6.800 2.200z" fill="#ececec" transform={`rotate(${a} 12 12)`} />)}
        </Svg>
      </TaskButton>
      <WebSearch>
        <Svg w={20}><path d="M17.500 11.500H6c0 5.500 7 6 11 3-1.500 5-14 6-14-4C3 1 17.500.5 17.500 11.500zM6.200 8.800h7.600c-.5-4-7-4-7.600 0z" fill="#3c9cf0" fillRule="evenodd" /><path d="M2 18C-2 14 8 3 16.500 1.500c2-.3 2.300 1 1.500 3" stroke="#5cb4fc" strokeWidth="1.500" /></Svg>
        <input placeholder="搜索网页和文件" aria-label="搜索网页和文件" />
        <Svg w={18}><circle cx="8" cy="8" r="6.500" stroke="#999" strokeWidth="1.200" /><path d="M13 13l4 4" stroke="#999" strokeWidth="1.200" /></Svg>
      </WebSearch>
      <TaskButton $w={53} aria-label="提醒">
        <Svg w={28} h={26}>
          <path d="M12.500 14.500c-2.500 1.500-3.500-3 0-3.500 4-.3 4.500 5.500.5 6.500-5 1-8-5-4-8.500 3-2.500 8-1.500 9.500 2" stroke="#e8e8e8" strokeWidth="1.400" />
          <path d="M18 14c.5 5-4 8.500-9 7.500-6-1.500-8-8-4.500-12.500 1.500-2 3.500-3 6-3.500" stroke="#e8e8e8" strokeWidth="1.600" />
          <path d="M14 11c2-1.500 2-2 2-5 0-6 9-6 9 0 0 3 0 3.500 2 5z" fill="#e8ae10" /><circle cx="20.500" cy="12" r="1.600" fill="#e8ae10" />
        </Svg>
      </TaskButton>
      <TaskButton aria-label="助手"><Svg w={24}><rect width="24" height="24" rx="3" fill="#0c94fc" /><path d="M15 6.500c-1-1.500-3-1-3 1v8.500c0 3-4 3-4 0M6 9c-1 2 0 3 2 3h9c2.500 0 2 3.500 0 3.500" stroke="#fff" strokeWidth="2.200" strokeLinecap="round" /></Svg></TaskButton>
      <TaskButton $line aria-label="广联达"><Svg w={24}><path d="M23 1C14-1.500 1 3 1 13c0 13 22 14 21.500-3H15c-2.500 1-3 3-3 4 1.500 0 3-.5 4.500-1-.5 5-8.500 5.500-9-.5C7 6 15 3.500 20 3.500c1.500 0 3-1 3-2.500z" fill="#1ca4f4" /></Svg></TaskButton>
      <TaskButton $active $line aria-label="计价软件"><AppIcon w={24} /></TaskButton>
      <Spacer />
      <TaskScroll><Chev r={90} /><Chev r={270} /></TaskScroll>
      <TaskButton $w={60} aria-label="人脉"><Svg w={16}><circle cx="10.500" cy="3.500" r="2.800" stroke="#fff" strokeWidth="1.200" /><circle cx="4.500" cy="8.500" r="2.300" stroke="#fff" strokeWidth="1.200" /><path d="M.7 15.500c0-6 7.500-6 7.500 0M7.500 9c2-4 7.500-3 7.800 2" stroke="#fff" strokeWidth="1.200" /></Svg></TaskButton>
      <TaskText $w={66}>48%<br />CPU使用</TaskText>
      <TaskButton $w={34} aria-label="展开托盘"><Svg w={12} h={8}><path d="M.5 7L6 1.500 11.500 7" stroke="#fff" strokeWidth="1.300" /></Svg></TaskButton>
      <TaskButton $w={16} aria-label="电源"><Svg w={16} h={12}><rect x="4.500" y="3.500" width="10" height="7" stroke="#fff" /><path d="M6.500 5.500h6v3h-6z" fill="#fff" /><path d="M15.500 5.500v3M.5 2.500h4v2c0 1-4 1-4 0zM1.500 0v2M3.500 0v2M2.500 5v4h2" stroke="#fff" /></Svg></TaskButton>
      <TaskButton $w={34} aria-label="网络"><Svg w={14}><path d="M1.500 13C1.500 6 6 1.500 13 1.500M4.500 13c0-5 3.500-8.500 8.500-8.500M7.500 13c0-3.500 2-5.500 5.500-5.500" stroke="#c8d0d2" strokeWidth="1.200" /><circle cx="11.500" cy="11.500" r="1.800" fill="#fff" /></Svg></TaskButton>
      <TaskButton $w={14} aria-label="音量"><Svg w={16}><path d="M.6 5.500h3L7 2.500v11l-3.400-3h-3z" stroke="#fff" strokeWidth="1.200" /><path d="M9 6c1 1.500 1 2.500 0 4M11 4c2 3 2 5 0 8M13 2.500c3 4 3 7 0 11" stroke="#fff" /></Svg></TaskButton>
      <TaskButton $w={42} aria-label="键盘"><Svg w={23} h={13}><rect x=".5" y=".5" width="22" height="12" stroke="#fff" /><path d="M3 3.500h17M3 6.500h17" stroke="#fff" strokeDasharray="1.500 1" /><path d="M3 9.500h2M6.500 9.500h10M18 9.500h2" stroke="#fff" /></Svg></TaskButton>
      <TaskButton $w={14}>中</TaskButton>
      <TaskButton $w={41} aria-label="输入法"><SogouS w={16} /></TaskButton>
      <TaskText $w={66}>17:23<br />2018/11/11</TaskText>
      <TaskButton $w={52} aria-label="通知中心">
        <Svg w={26}><path d="M1 2h15v11h-8l-3 3.500V13H1z" fill="#fff" /><path d="M3.500 5.500h10M3.500 8.500h10" stroke="#222" /><circle cx="16.500" cy="17.500" r="7.500" fill="#222a2c" stroke="#888" /><text x="16.500" y="22" textAnchor="middle" fontSize="12" fill="#fff" fontFamily="Open Sans">1</text></Svg>
      </TaskButton>
      <Edge />
    </TaskBar>
  )
}

export default function App() {
  return (
    <Window>
      <Global />
      <TopBars />
      <Work>
        <TreeArea />
        <Right>
          <ToolRow>
            <ToolGroup>
              <Grip $wide />
              <Drop>插入</Drop>
              <Drop>添加</Drop>
              <Drop tight>补充</Drop>
              <Drop>查询</Drop>
              <Drop>存档</Drop>
              <IconTool aria-label="查找"><Binoc /></IconTool>
              <Sep />
              <Drop tight>整理清单</Drop>
              <Drop>安装费用</Drop>
              <Drop>单价构成</Drop>
              <Drop>批量换算</Drop>
              <Drop tight>其他</Drop>
              <Drop tight icon={<Expand />}>展开到</Drop>
              <Drop tight>重用组价</Drop>
              <Sep />
              <Tool $on><Lock />解除清单锁定</Tool>
              <IconTool aria-label="填充颜色"><Paint /></IconTool>
              <CaretTool aria-label="颜色列表" />
              <Sep />
              <IconTool aria-label="上移"><Arrow r={90} c="#3c7cf0" s="#1c48b0" /></IconTool>
              <IconTool aria-label="下移"><Arrow r={270} c="#3c7cf0" s="#1c48b0" /></IconTool>
              <Tool disabled><Extract />提取图形工程量</Tool>
            </ToolGroup>
          </ToolRow>
          <BillGrid />
          <HSplit><i /></HSplit>
          <DetailTabs>
            <DetailTab $on>工料机显示</DetailTab>
            {detailTabs.map(t => <DetailTab key={t}>{t}</DetailTab>)}
          </DetailTabs>
          <Detail>
            <ResourceGrid />
            <Actions>
              <ActionGrid>
                <ActionButton>插入</ActionButton>
                <ActionButton>添加</ActionButton>
                <ActionButton>删除</ActionButton>
                <ActionButton>查询</ActionButton>
                <ActionButton $span={2}>补充</ActionButton>
                <ActionButton $span={2}>材料价格查询</ActionButton>
              </ActionGrid>
              <Filter>
                <legend>筛选条件</legend>
                {['人工', '机械', '材料', '设备', '主材', '所有'].map(t => (
                  <label key={t}><Radio type="radio" name="filter" defaultChecked={t === '所有'} />{t}</label>
                ))}
              </Filter>
            </Actions>
          </Detail>
        </Right>
      </Work>
      <StatusBar>
        <StatusCell>清单库: 工程量清单项目计量规范(2013-湖北)</StatusCell>
        <StatusCell>定额库: 湖北省房屋建筑与装饰工程消耗量定额及基价表(2013)</StatusCell>
        <StatusCell>定额专业: 建筑工程</StatusCell>
        <StatusCell>当前分部: 砌筑工程</StatusCell>
        <StatusCell>计税模式: 增值税(一般计税方法)</StatusCell>
      </StatusBar>
      <Taskbar />
    </Window>
  )
}
